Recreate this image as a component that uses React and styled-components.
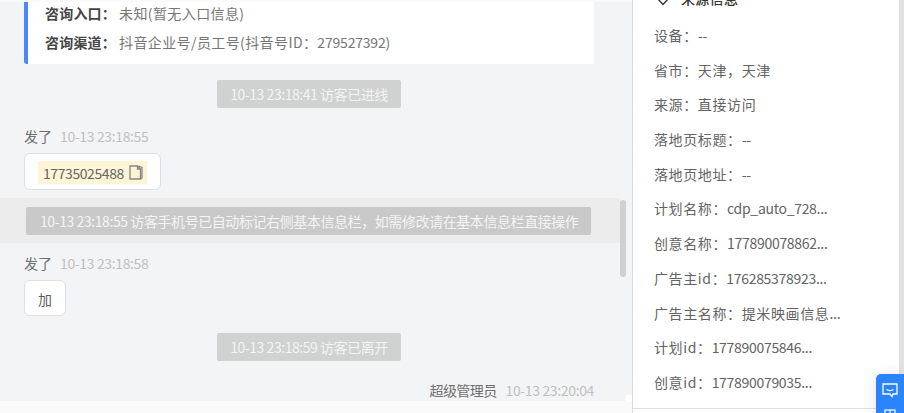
import React from "react";
import styled, { createGlobalStyle } from "styled-components";

const Global = createGlobalStyle`
  html, body { margin: 0; padding: 0; background: #fff; }
  body { font-family: "Noto Sans CJK SC", "Noto Sans", sans-serif; font-size: 14px; color: #595959; }
`;
const Page = styled.div`
  width: 904px; height: 413px; overflow: hidden; display: flex; position: relative; background: #fff;
`;
const ChatColumn = styled.div`
  width: 633px; height: 413px; flex: none; display: flex; flex-direction: column; background: #fafafa; position: relative;
  box-sizing: border-box; border-right: 1px solid #dadada;
`;
const ChatScroll = styled.div`
  height: 401px; flex: none; overflow: hidden; background: #f3f4f6; border-top: 2px solid #fafafa; box-sizing: border-box;
`;
const InfoCard = styled.div`
  width: 570px; height: 62px; margin-left: 24px; box-sizing: border-box; background: #fff;
  border-left: 4px solid #4b87fb; border-bottom-left-radius: 3px; padding-left: 17px;
  display: flex; flex-direction: column;
`;
const InfoLine = styled.div`
  height: 29px; line-height: 29px; color: #767676; white-space: nowrap; letter-spacing: 0.4px;
  margin-top: ${p => p.$first ? "-3px" : "0"};
  b { font-weight: 700; color: #444; margin-right: 3px; letter-spacing: 0.2px; }
  i { font-style: normal; letter-spacing: -0.2px; }
`;
const SystemRow = styled.div`
  display: flex; justify-content: center; box-sizing: border-box;
  width: 618px; padding-top: ${p => p.$top}px;
`;
const SystemPill = styled.div`
  height: 28px; line-height: 28px; padding: 0 13px; border-radius: 2px; background: #d0d1d1; color: #f4f4f4; white-space: nowrap; letter-spacing: -0.45px;
`;
const HighlightRow = styled.div`
  width: 620px; height: 45px; margin-top: 8px; background: #ececec; padding: 9px 0 0 26px; box-sizing: border-box;
`;
const NoticePill = styled(SystemPill)`
  width: 565px; box-sizing: border-box; padding: 0 0 0 14px; background: #c9c9c9; letter-spacing: -0.42px;
`;
const SenderRow = styled.div`
  margin: ${p => p.$top}px 0 0 24px; height: 20px; line-height: 20px; display: flex; gap: ${p => p.$right ? 9 : 8}px; white-space: nowrap;
  color: #6f6f6f; justify-content: ${p => p.$right ? "flex-end" : "flex-start"};
  width: ${p => p.$right ? "570px" : "auto"};
  letter-spacing: ${p => p.$right ? "-0.6px" : "0"};
`;
const Time = styled.span`color: #c0c0c0; letter-spacing: -0.36px;`;
const Bubble = styled.div`
  margin: ${p => p.$top}px 0 0 24px; width: fit-content; box-sizing: border-box; background: #fff; border: 1px solid #dcdfe6; border-radius: 6px;
  padding: 7px 13px; display: flex; height: ${p => p.$h}px;
`;
const Highlighted = styled.span`
  display: inline-flex; align-items: center; gap: 5px; height: 23px; padding: 0 4px 0 5px; background: #fdf5d6; color: #666; white-space: nowrap; letter-spacing: -0.42px;
`;
const PlainText = styled.span`line-height: 22px; color: #5f5f5f;`;
const Scrollbar = styled.div`
  position: absolute; left: 620px; top: 200px; width: 5.5px; height: 77px; background: #d0d0d0; border-radius: 3px;
`;
const CornerNotch = styled.div`
  position: absolute; left: 626px; top: 395px; width: 6px; height: 6px; background: #fff;
`;
const SidePanel = styled.div`
  width: 266px; height: 413px; flex: none; box-sizing: border-box; background: #fff; position: relative; overflow: hidden;
  display: flex; flex-direction: column;
`;
const SideHeader = styled.div`
  height: 26px; margin: -14px 0 6px; padding-left: 23px; display: flex; align-items: center; gap: 11px; color: #333; font-weight: 500; flex: none;
  span { margin-top: -3px; letter-spacing: 0.3px; }
`;
const SideRow = styled.div`
  height: 34.7px; line-height: 34.7px; padding-left: 21px; color: #636363; white-space: nowrap; flex: none;
`;
const Label = styled.span`letter-spacing: 0.62px;`;
const Value = styled.span`letter-spacing: -0.3px;`;
const SideFooter = styled.div`
  position: absolute; left: 0; right: 0; top: 408px; border-top: 1px solid #e0e0e0;
`;
const Gutter = styled.div`
  width: 5px; height: 413px; background: #e2e2e2; flex: none;
`;
const FloatButton = styled.div`
  position: absolute; left: 876px; top: 374px; width: 28px; height: 60px; background: #2a84fb; border-radius: 5px 0 0 5px;
  display: flex; flex-direction: column; align-items: center; padding-top: 9px; box-sizing: border-box; gap: 11px;
  box-shadow: 0 0 14px rgba(0,0,0,.1);
`;

const CopyIcon = () => (
  <svg width="14" height="15" viewBox="0 0 14 15" fill="none" stroke="#858585" strokeWidth="1.3">
    <path d="M1 1h7.5l3 3v10H1z" />
    <path d="M8.5 1v3h3" />
    <path d="M9.5 1l3.5 1.5V13l-1.5 1" />
  </svg>
);
const PinIcon = () => (
  <svg width="14" height="16" viewBox="0 0 14 16" fill="none" stroke="#333" strokeWidth="1.4">
    <path d="M1 7l6 6.5L13 7" />
  </svg>
);
const ChatIcon = () => (
  <svg width="16" height="15" viewBox="0 0 16 15" fill="none" stroke="#fff" strokeWidth="1.3">
    <path d="M1 1h14v10h-4l-1 2.5L8 11H1z" />
    <path d="M4.5 6.5c2 1.2 5 1.2 7 0" />
  </svg>
);
const GridIcon = () => (
  <svg width="12" height="12" viewBox="0 0 12 12" fill="none" stroke="#fff" strokeWidth="1.2">
    <rect x="1" y="1" width="10" height="10" /><path d="M6 1v10M1 5h10" />
  </svg>
);

const rows = [
  ["设备：", "--"],
  ["省市：天津，天津", ""],
  ["来源：直接访问", ""],
  ["落地页标题：", "--"],
  ["落地页地址：", "--"],
  ["计划名称：", "cdp_auto_728..."],
  ["创意名称：", "177890078862..."],
  ["广告主id：", "176285378923..."],
  ["广告主名称：提米映画信息", "..."],
  ["计划id：", "177890075846..."],
  ["创意id：", "177890079035..."],
];

export default function App() {
  return (
    <Page>
      <Global />
      <ChatColumn>
        <ChatScroll>
          <InfoCard>
            <InfoLine $first><b>咨询入口：</b>未知(暂无入口信息)</InfoLine>
            <InfoLine><b>咨询渠道：</b>抖音企业号/员工号(抖音号ID：<i>279527392)</i></InfoLine>
          </InfoCard>
          <SystemRow $top={16}><SystemPill>10-13 23:18:41 访客已进线</SystemPill></SystemRow>
          <SenderRow $top={18}>发了<Time>10-13 23:18:55</Time></SenderRow>
          <Bubble $top={7} $h={37}>
            <Highlighted>17735025488<CopyIcon /></Highlighted>
          </Bubble>
          <HighlightRow><NoticePill>10-13 23:18:55 访客手机号已自动标记右侧基本信息栏，如需修改请在基本信息栏直接操作</NoticePill></HighlightRow>
          <SenderRow $top={10}>发了<Time>10-13 23:18:58</Time></SenderRow>
          <Bubble $top={7} $h={36}><PlainText>加</PlainText></Bubble>
          <SystemRow $top={17}><SystemPill>10-13 23:18:59 访客已离开</SystemPill></SystemRow>
          <SenderRow $top={19} $right>超级管理员<Time>10-13 23:20:04</Time></SenderRow>
        </ChatScroll>
        <Scrollbar />
        <CornerNotch />
      </ChatColumn>
      <SidePanel>
        <SideHeader><PinIcon /><span>来源信息</span></SideHeader>
        {rows.map(([l, v]) => <SideRow key={l}><Label>{l}</Label><Value>{v}</Value></SideRow>)}
        <SideFooter />
      </SidePanel>
      <Gutter />
      <FloatButton><ChatIcon /><GridIcon /></FloatButton>
    </Page>
  );
}
